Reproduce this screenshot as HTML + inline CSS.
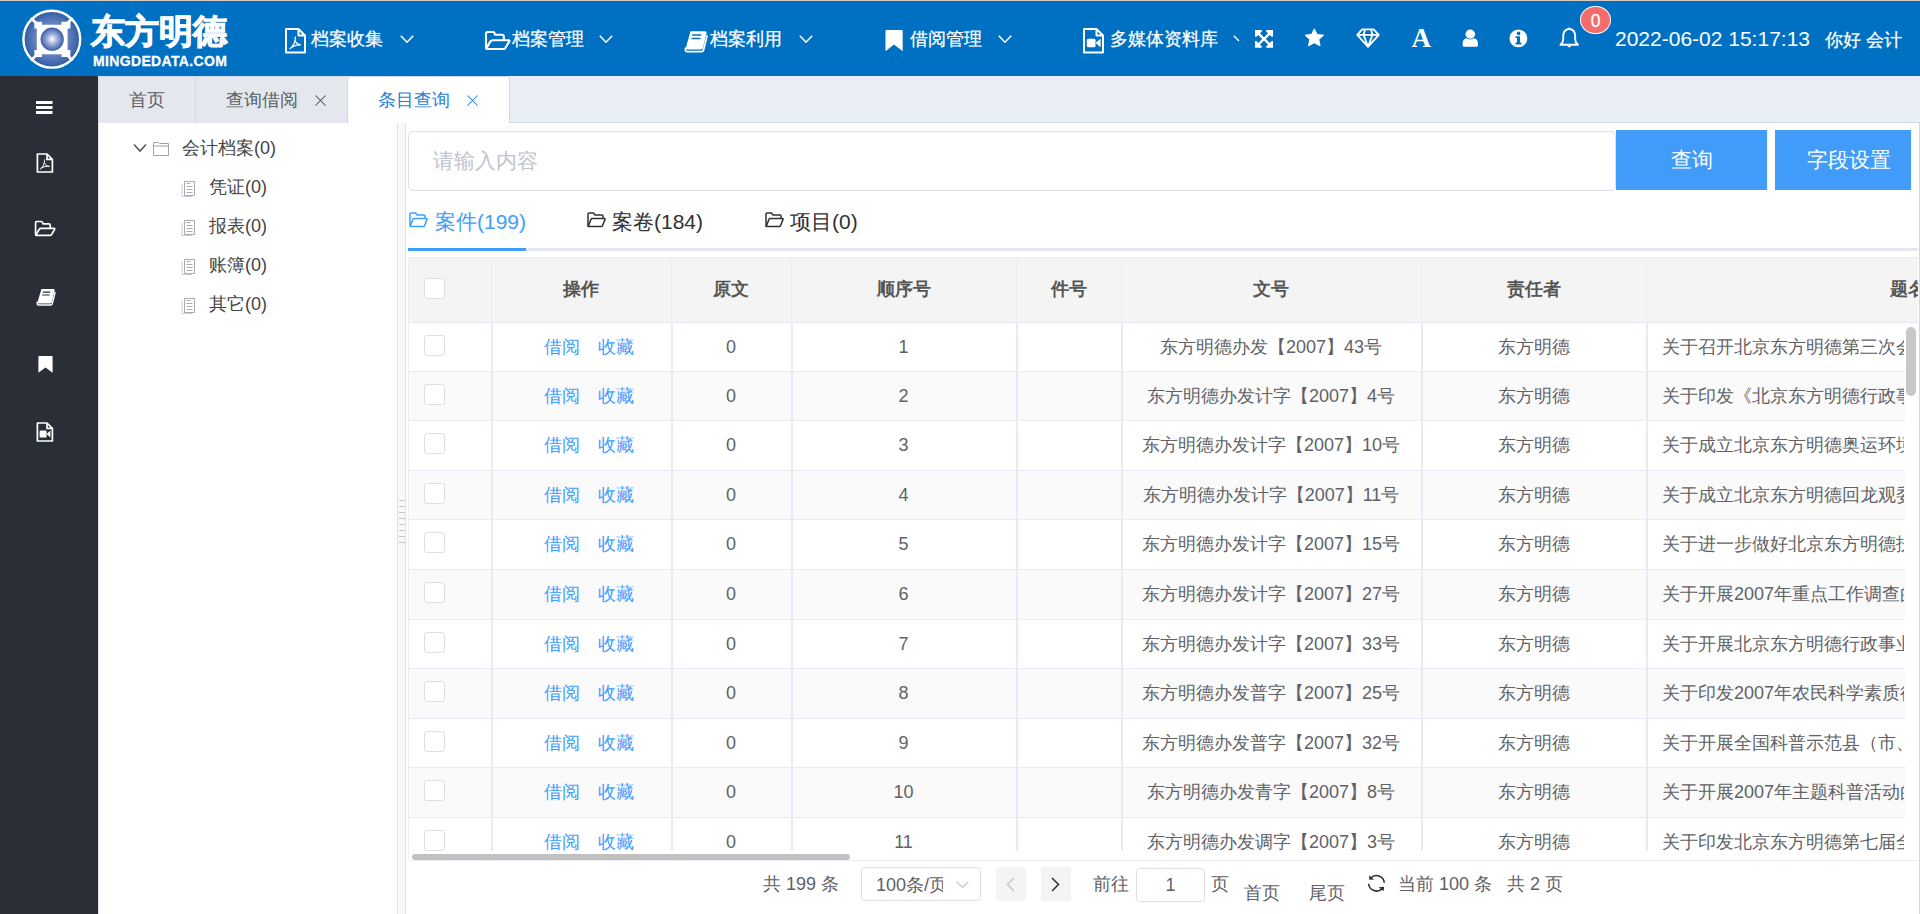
<!DOCTYPE html>
<html><head><meta charset="utf-8">
<style>
*{box-sizing:border-box;margin:0;padding:0}
html,body{width:1920px;height:914px;overflow:hidden;background:#fff;font-family:"Liberation Sans",sans-serif;color:#606266}
.abs{position:absolute}
.t{position:absolute;white-space:nowrap;line-height:1}
svg{position:absolute;overflow:visible}
#topline{left:0;top:0;width:1920px;height:1px;background:#d6cac2}
#hdr{left:0;top:1px;width:1920px;height:75px;background:#0070c2;color:#fff}
#hdr .t{color:#fff;font-size:18.4px;-webkit-text-stroke:0.25px #fff}
#side{left:0;top:76px;width:98px;height:838px;background:#2a2e37}
#tabs{left:98px;top:76px;width:1822px;height:47px;background:#e9eef6;border-bottom:1px solid #d1d9e6}
#tree{left:98px;top:123px;width:299px;height:791px;background:#fff;border-left:1px solid #dde4f0}
#split{left:397px;top:123px;width:9px;height:791px;background:#f8f8f9;border-left:1px solid #dfe1e6;border-right:1px solid #dfe1e6}
#main{left:406px;top:123px;width:1514px;height:791px;background:#fff;border-right:1px solid #d3d7df}
</style></head><body>
<div id="topline" class="abs"></div>
<div id="hdr" class="abs">
  <!-- logo -->
  <svg style="left:0;top:-1px" width="100" height="76" viewBox="0 0 100 76">
    <defs>
      <radialGradient id="lg1" cx="0.5" cy="0.5" r="0.5">
        <stop offset="0" stop-color="#9aaedc"/><stop offset="0.55" stop-color="#6a84c2"/><stop offset="1" stop-color="#2e5ba3"/>
      </radialGradient>
      <radialGradient id="rg1" cx="0.5" cy="0.5" r="0.5">
        <stop offset="0" stop-color="#ffffff"/><stop offset="0.4" stop-color="#a8b6e0"/><stop offset="1" stop-color="#3a5ca8"/>
      </radialGradient>
    </defs>
    <circle cx="51.8" cy="39.2" r="28.4" fill="url(#lg1)" stroke="#fff" stroke-width="2.4"/>
    <path d="M31,18 L38,25 M72.6,18 L65.6,25 M31,60.4 L38,53.4 M72.6,60.4 L65.6,53.4" stroke="#fff" stroke-width="2.8"/>
    <path fill="#fff" d="M34.4,21.7 H42 V24.8 H61.5 V21.7 H70.4 V28.5 H67.6 V50 H70.4 V57 H61.5 V54.2 H42 V57 H34.4 V50 H36.8 V28.5 H34.4 Z"/>
    <circle cx="52.2" cy="39.2" r="11.6" fill="url(#rg1)"/>
  </svg>
  <div class="t" style="left:91px;top:13px;font-size:34px;font-weight:bold;letter-spacing:0px;-webkit-text-stroke:1px #fff;transform:scaleX(1.0)">东方明德</div>
  <div class="t" style="left:93px;top:52px;font-size:14px;font-weight:bold;letter-spacing:0.35px;transform:scaleY(1.06);transform-origin:0 0">MINGDEDATA.COM</div>

  <!-- nav -->
  <svg style="left:285px;top:27px" width="22" height="26" viewBox="0 0 22 26">
    <path d="M1,1 H13.5 L20,7.5 V24.5 H1 Z M13.5,1 V7.5 H20" fill="none" stroke="#fff" stroke-width="2" stroke-linejoin="round"/>
    <path d="M4.5,21 C7,19.5 9,17 10,12.5 C10.5,10 10.5,9 10.2,8.5 M10,12.5 C11,15.5 13,16.5 16,17 M6,19.8 C9,17.5 13,16.5 16,17" fill="none" stroke="#fff" stroke-width="1.2"/>
  </svg>
  <div class="t" style="left:311px;top:29px">档案收集</div>
  <svg style="left:400px;top:34px" width="14" height="9" viewBox="0 0 14 9"><path d="M0.8,0.8 L7,7.2 L13.2,0.8" fill="none" stroke="#fff" stroke-width="1.6"/></svg>

  <svg style="left:484px;top:29px" width="27" height="21" viewBox="0 0 27 21">
    <path d="M2,18.5 V3.5 Q2,2 3.5,2 H9 Q10.2,2 10.6,3.2 L11,4.8 H18 Q19.8,4.8 19.8,6.6 V10" fill="none" stroke="#fff" stroke-width="2.1" stroke-linejoin="round"/>
    <path d="M2.2,18.6 L6.4,11.4 Q7.2,10.2 8.6,10.2 H24.6 Q26,10.2 25.2,11.6 L21.4,18 Q20.8,19 19.6,19 H3 Z" fill="none" stroke="#fff" stroke-width="2.1" stroke-linejoin="round"/>
  </svg>
  <div class="t" style="left:512px;top:29px">档案管理</div>
  <svg style="left:599px;top:34px" width="14" height="9" viewBox="0 0 14 9"><path d="M0.8,0.8 L7,7.2 L13.2,0.8" fill="none" stroke="#fff" stroke-width="1.6"/></svg>

  <svg style="left:684px;top:29px" width="24" height="23" viewBox="0 0 24 23">
    <path d="M6.5,1.2 H21 Q23,1.2 22.6,3 L19,18 Q18.5,19.5 17,19.5 H3 Q1.5,19.5 1.8,18 Z" fill="#fff"/>
    <path d="M1.6,17.5 Q0.5,21.6 3.4,21.6 H17.6 Q19.2,21.6 19.6,20 L23.2,5.4" fill="none" stroke="#fff" stroke-width="1.7"/>
    <path d="M8.2,5 H17.2 M7.6,8.5 H16.4" stroke="#0070c2" stroke-width="1.5"/>
  </svg>
  <div class="t" style="left:710px;top:29px">档案利用</div>
  <svg style="left:799px;top:34px" width="14" height="9" viewBox="0 0 14 9"><path d="M0.8,0.8 L7,7.2 L13.2,0.8" fill="none" stroke="#fff" stroke-width="1.6"/></svg>

  <svg style="left:885px;top:29px" width="18" height="22" viewBox="0 0 18 22">
    <path d="M0.5,1 Q0.5,0 1.5,0 H16.5 Q17.7,0 17.7,1 V20.5 Q17.7,21.3 16.8,20.6 L9,14.5 L1.4,20.6 Q0.5,21.3 0.5,20.5 Z" fill="#fff"/>
  </svg>
  <div class="t" style="left:910px;top:29px">借阅管理</div>
  <svg style="left:998px;top:34px" width="14" height="9" viewBox="0 0 14 9"><path d="M0.8,0.8 L7,7.2 L13.2,0.8" fill="none" stroke="#fff" stroke-width="1.6"/></svg>

  <svg style="left:1083px;top:27px" width="22" height="26" viewBox="0 0 22 26">
    <path d="M1,1 H13.5 L20,7.5 V24.5 H1 Z M13.5,1 V7.5 H20" fill="none" stroke="#fff" stroke-width="2" stroke-linejoin="round"/>
    <rect x="3.8" y="10.7" width="8.7" height="8.6" rx="1.5" fill="#fff"/>
    <path d="M12.6,15 L17.6,10.7 V19.3 Z" fill="#fff"/>
  </svg>
  <div class="t" style="left:1110px;top:29px">多媒体资料库</div>
  <svg style="left:1233px;top:34px" width="8" height="8" viewBox="0 0 8 8"><path d="M0.8,0.8 L6,6" fill="none" stroke="#fff" stroke-width="1.4"/></svg>

  <!-- right icons -->
  <svg style="left:1255px;top:28.5px" width="19" height="18" viewBox="0 0 19 18">
    <path fill="#fff" d="M0,0 H6.8 V1.4 L5,3.2 L9,7.2 L13,3.2 L11.2,1.4 V0 H18 V6.7 H16.6 L14.8,4.9 L10.8,8.9 L14.8,12.9 L16.6,11.1 H18 V17.8 H11.2 V16.4 L13,14.6 L9,10.6 L5,14.6 L6.8,16.4 V17.8 H0 V11.1 H1.4 L3.2,12.9 L7.2,8.9 L3.2,4.9 L1.4,6.7 H0 Z"/>
  </svg>
  <svg style="left:1304px;top:27px" width="21" height="20" viewBox="0 0 21 20">
    <path fill="#fff" d="M10.3,0.8 L13.1,6.5 L19.6,7.2 L14.8,11.5 L16.1,17.9 L10.3,14.7 L4.5,17.9 L5.8,11.5 L1,7.2 L7.5,6.5 Z" stroke="#fff" stroke-width="1" stroke-linejoin="round"/>
  </svg>
  <svg style="left:1356px;top:27.3px" width="25" height="21" viewBox="0 0 25 21">
    <path d="M6.2,1.3 H17.6 L22.8,6.9 L12,18.9 L1.2,6.9 Z M1.2,6.9 H22.8 M9,1.3 L7.6,6.9 L12,18.9 L16.4,6.9 L15,1.3" fill="none" stroke="#fff" stroke-width="1.8" stroke-linejoin="round"/>
  </svg>
  <div class="t" style="left:1411.5px;top:27px;font-family:'Liberation Serif',serif;font-weight:bold;font-size:27px;line-height:20px;-webkit-text-stroke:0">A</div>
  <svg style="left:1462px;top:28px" width="17" height="19" viewBox="0 0 17 20" preserveAspectRatio="none">
    <circle cx="8.3" cy="5.4" r="4.8" fill="#fff"/>
    <path d="M0.5,16.5 Q0.5,10.6 4.2,9.8 Q8.3,12.2 12.4,9.8 Q16,10.6 16,16.5 Q16,18.8 13.8,18.8 H2.8 Q0.5,18.8 0.5,16.5 Z" fill="#fff"/>
  </svg>
  <svg style="left:1509px;top:27.5px" width="19" height="19" viewBox="0 0 19 19">
    <circle cx="9.4" cy="9.4" r="8.9" fill="#fff"/>
    <circle cx="9.6" cy="4.4" r="1.8" fill="#0070c2"/>
    <path d="M6.6,7.3 H11 V13.6 H12.4 V15.4 H6.6 V13.6 H8 V9.1 H6.6 Z" fill="#0070c2"/>
  </svg>
  <svg style="left:1559px;top:26px" width="22" height="22" viewBox="0 0 22 22">
    <path d="M10.2,1.8 Q4.2,2.6 4.2,9.5 V12.5 Q4.2,15.4 1.4,17.8 H19 Q16.2,15.4 16.2,12.5 V9.5 Q16.2,2.6 10.2,1.8 Z" fill="none" stroke="#fff" stroke-width="1.9" stroke-linejoin="round"/>
    <path d="M8.4,18.8 Q10.2,21.4 12,18.8" fill="#fff" stroke="#fff" stroke-width="1"/>
    <circle cx="10.2" cy="1.6" r="1" fill="#fff"/>
  </svg>
  <div class="abs" style="left:1580px;top:5px;width:31px;height:28px;border-radius:15px/14px;background:#f56c6c;border:1px solid #fff;color:#fff;font-size:17.5px;line-height:28.5px;text-align:center;-webkit-text-stroke:0.3px #fff">0</div>
  <div class="t" style="left:1615px;top:27px;font-size:21px;-webkit-text-stroke:0">2022-06-02 15:17:13</div>
  <div class="t" style="left:1825px;top:30px;font-size:18px">你好 会计</div>
</div>

<div id="side" class="abs">
  <svg style="left:36px;top:25px" width="17" height="14" viewBox="0 0 17 14"><path d="M0,0 H16.5 V3 H0 Z M0,5 H16.5 V8 H0 Z M0,10 H16.5 V13 H0 Z" fill="#fff"/></svg>
  <svg style="left:36px;top:77px" width="18" height="20" viewBox="0 0 18 20">
    <path d="M1.4,1 H11 L16.4,6.4 V19 H1.4 Z M11,1 V6.4 H16.4" fill="none" stroke="#fff" stroke-width="1.7" stroke-linejoin="round"/>
    <path d="M4,16.2 C6,15 7.5,13 8.3,9.5 C8.7,7.5 8.5,6.5 8.4,6.4 M8.3,9.5 C9,12 10.7,13 13.4,13.4 M5.3,15.2 C7.5,13.6 10.5,13 13.4,13.4" fill="none" stroke="#fff" stroke-width="1"/>
  </svg>
  <svg style="left:34px;top:144px" width="22" height="17" viewBox="0 0 22 17">
    <path d="M1.6,15 V2.8 Q1.6,1.5 2.8,1.5 H7.2 Q8.2,1.5 8.6,2.5 L9,3.8 H14.8 Q16.2,3.8 16.2,5.2 V8" fill="none" stroke="#fff" stroke-width="1.7" stroke-linejoin="round"/>
    <path d="M1.8,15.2 L5.2,9.4 Q5.8,8.4 7,8.4 H20 Q21.2,8.4 20.5,9.6 L17.5,14.6 Q17,15.4 16,15.4 H2.4 Z" fill="none" stroke="#fff" stroke-width="1.7" stroke-linejoin="round"/>
  </svg>
  <svg style="left:36px;top:212px" width="20" height="18" viewBox="0 0 20 18">
    <path d="M5.4,1 H17.4 Q19,1 18.7,2.5 L15.8,14.2 Q15.4,15.4 14.2,15.4 H2.6 Q1.3,15.4 1.5,14.2 Z" fill="#fff"/>
    <path d="M1.4,13.8 Q0.4,17 2.8,17 H14.6 Q15.9,17 16.3,15.7 L19.2,4.2" fill="none" stroke="#fff" stroke-width="1.4"/>
    <path d="M6.8,4.2 H14.4 M6.3,7 H13.7" stroke="#2a2e37" stroke-width="1.2"/>
  </svg>
  <svg style="left:38px;top:280px" width="15" height="17" viewBox="0 0 15 17">
    <path d="M0.4,0.8 Q0.4,0 1.2,0 H13.8 Q14.6,0 14.6,0.8 V16.2 Q14.6,16.9 13.9,16.3 L7.5,11.5 L1.1,16.3 Q0.4,16.9 0.4,16.2 Z" fill="#fff"/>
  </svg>
  <svg style="left:36px;top:346px" width="18" height="20" viewBox="0 0 18 20">
    <path d="M1.4,1 H11 L16.4,6.4 V19 H1.4 Z M11,1 V6.4 H16.4" fill="none" stroke="#fff" stroke-width="1.7" stroke-linejoin="round"/>
    <rect x="3.6" y="8.6" width="7" height="7" rx="1.2" fill="#fff"/>
    <path d="M10.6,12.1 L14.4,8.6 V15.6 Z" fill="#fff"/>
  </svg>
</div>


<div id="tabs" class="abs">
<div class="abs" style="left:0;top:0;width:249px;height:47px;background:#e4e8ee;border-left:1px solid #d1d9e6;border-top:1px solid #d1d9e6;border-radius:3px 0 0 0"></div>
<div class="t" style="left:31px;top:15px;font-size:18px;color:#5a5e66">首页</div>
<div class="abs" style="left:97px;top:1px;width:1px;height:46px;background:#d1d9e6"></div>
<div class="t" style="left:128px;top:15px;font-size:18px;color:#5a5e66">查询借阅</div>
<svg style="left:216.5px;top:18.5px" width="11" height="11" viewBox="0 0 11 11"><path d="M0.5,0.5 L10.5,10.5 M10.5,0.5 L0.5,10.5" stroke="#4a4a4a" stroke-width="1.05"/></svg>
<div class="abs" style="left:249px;top:0;width:163px;height:48px;background:#fff;border:1px solid #d1d9e6;border-bottom:none;border-radius:4px 4px 0 0"></div>
<div class="t" style="left:280px;top:15px;font-size:18px;color:#1f7ed8">条目查询</div>
<svg style="left:368.5px;top:18.5px" width="11" height="11" viewBox="0 0 11 11"><path d="M0.5,0.5 L10.5,10.5 M10.5,0.5 L0.5,10.5" stroke="#1f7ed8" stroke-width="1.05"/></svg>
</div>

<div id="tree" class="abs">
<svg style="left:34px;top:20px" width="14" height="10" viewBox="0 0 14 10"><path d="M1,1.5 L7,8 L13,1.5" fill="none" stroke="#555" stroke-width="1.6"/></svg>
<svg style="left:54px;top:19px" width="16" height="14" viewBox="0 0 16 14"><path d="M0.5,0.5 H5.5 L6.5,1.5 H15.5 V13.5 H0.5 Z M0.5,4 H15.5" fill="none" stroke="#a0a3a8" stroke-width="1"/></svg>
<div class="t" style="left:83px;top:16px;font-size:18px;color:#444">会计档案(0)</div>
<svg style="left:82px;top:57.5px" width="15" height="16" viewBox="0 0 15 16"><path d="M3.5,0.5 H13.5 V14.5 H3.5 Z" fill="#fff" stroke="#a8abb0" stroke-width="1"/><path d="M1,2.5 V15.5 H11" fill="none" stroke="#c8cacf" stroke-width="1"/><path d="M5.5,2.5 H9.5 M5.5,5.5 H11.5 M5.5,8.5 H11.5 M5.5,11.5 H11.5" stroke="#a8abb0" stroke-width="1"/></svg>
<div class="t" style="left:110px;top:55px;font-size:18px;color:#444">凭证(0)</div>
<svg style="left:82px;top:96.5px" width="15" height="16" viewBox="0 0 15 16"><path d="M3.5,0.5 H13.5 V14.5 H3.5 Z" fill="#fff" stroke="#a8abb0" stroke-width="1"/><path d="M1,2.5 V15.5 H11" fill="none" stroke="#c8cacf" stroke-width="1"/><path d="M5.5,2.5 H9.5 M5.5,5.5 H11.5 M5.5,8.5 H11.5 M5.5,11.5 H11.5" stroke="#a8abb0" stroke-width="1"/></svg>
<div class="t" style="left:110px;top:94px;font-size:18px;color:#444">报表(0)</div>
<svg style="left:82px;top:135.5px" width="15" height="16" viewBox="0 0 15 16"><path d="M3.5,0.5 H13.5 V14.5 H3.5 Z" fill="#fff" stroke="#a8abb0" stroke-width="1"/><path d="M1,2.5 V15.5 H11" fill="none" stroke="#c8cacf" stroke-width="1"/><path d="M5.5,2.5 H9.5 M5.5,5.5 H11.5 M5.5,8.5 H11.5 M5.5,11.5 H11.5" stroke="#a8abb0" stroke-width="1"/></svg>
<div class="t" style="left:110px;top:133px;font-size:18px;color:#444">账簿(0)</div>
<svg style="left:82px;top:174.5px" width="15" height="16" viewBox="0 0 15 16"><path d="M3.5,0.5 H13.5 V14.5 H3.5 Z" fill="#fff" stroke="#a8abb0" stroke-width="1"/><path d="M1,2.5 V15.5 H11" fill="none" stroke="#c8cacf" stroke-width="1"/><path d="M5.5,2.5 H9.5 M5.5,5.5 H11.5 M5.5,8.5 H11.5 M5.5,11.5 H11.5" stroke="#a8abb0" stroke-width="1"/></svg>
<div class="t" style="left:110px;top:172px;font-size:18px;color:#444">其它(0)</div>
</div>

<div id="split" class="abs"></div>
<div class="abs" style="left:399px;top:500px;width:6px;height:1px;background:#c6c8cc"></div><div class="abs" style="left:399px;top:506px;width:6px;height:1px;background:#c6c8cc"></div><div class="abs" style="left:399px;top:512px;width:6px;height:1px;background:#c6c8cc"></div><div class="abs" style="left:399px;top:518px;width:6px;height:1px;background:#c6c8cc"></div><div class="abs" style="left:399px;top:524px;width:6px;height:1px;background:#c6c8cc"></div><div class="abs" style="left:399px;top:530px;width:6px;height:1px;background:#c6c8cc"></div><div class="abs" style="left:399px;top:536px;width:6px;height:1px;background:#c6c8cc"></div><div class="abs" style="left:399px;top:542px;width:6px;height:1px;background:#c6c8cc"></div>
<div id="main" class="abs"></div>
<div class="abs" style="left:0;top:0;width:1920px;height:914px">
<div class="abs" style="left:408px;top:131px;width:1208px;height:60px;border:1px solid #dcdfe6;border-radius:5px;background:#fff"></div>
<div class="t" style="left:433px;top:150.5px;font-size:20.5px;color:#c0c4cc">请输入内容</div>
<div class="abs" style="left:1616px;top:130px;width:151px;height:60px;background:#419cf9;color:#fff;font-size:21px;line-height:60px;text-align:center">查询</div>
<div class="abs" style="left:1775px;top:130px;width:136px;height:60px;background:#419cf9;color:#fff;font-size:21px;line-height:60px;text-align:center;padding-left:12px">字段设置</div>
<div class="abs" style="left:408px;top:248px;width:1510px;height:3px;background:#e4e7ed"></div>
<div class="abs" style="left:408px;top:248px;width:118px;height:3px;background:#409eff"></div>
<svg style="left:409px;top:212px" width="19" height="16" viewBox="0 0 19 16"><path d="M1,14.5 V2 Q1,1 2,1 H6.5 L8,3 H15 Q16,3 16,4 V6.2" fill="none" stroke="#409eff" stroke-width="1.5" stroke-linejoin="round"/><path d="M1.2,14.6 L4,7.2 Q4.3,6.4 5.2,6.4 H17.4 Q18.4,6.4 18,7.4 L15.4,14 Q15.1,14.6 14.4,14.6 Z" fill="none" stroke="#409eff" stroke-width="1.5" stroke-linejoin="round"/></svg>
<div class="t" style="left:435px;top:210.5px;font-size:21px;color:#409eff">案件(199)</div>
<svg style="left:587px;top:212px" width="19" height="16" viewBox="0 0 19 16"><path d="M1,14.5 V2 Q1,1 2,1 H6.5 L8,3 H15 Q16,3 16,4 V6.2" fill="none" stroke="#303133" stroke-width="1.5" stroke-linejoin="round"/><path d="M1.2,14.6 L4,7.2 Q4.3,6.4 5.2,6.4 H17.4 Q18.4,6.4 18,7.4 L15.4,14 Q15.1,14.6 14.4,14.6 Z" fill="none" stroke="#303133" stroke-width="1.5" stroke-linejoin="round"/></svg>
<div class="t" style="left:612px;top:210.5px;font-size:21px;color:#303133">案卷(184)</div>
<svg style="left:765px;top:212px" width="19" height="16" viewBox="0 0 19 16"><path d="M1,14.5 V2 Q1,1 2,1 H6.5 L8,3 H15 Q16,3 16,4 V6.2" fill="none" stroke="#303133" stroke-width="1.5" stroke-linejoin="round"/><path d="M1.2,14.6 L4,7.2 Q4.3,6.4 5.2,6.4 H17.4 Q18.4,6.4 18,7.4 L15.4,14 Q15.1,14.6 14.4,14.6 Z" fill="none" stroke="#303133" stroke-width="1.5" stroke-linejoin="round"/></svg>
<div class="t" style="left:790px;top:210.5px;font-size:21px;color:#303133">项目(0)</div>
<div class="abs" style="left:408px;top:257px;width:1510px;height:604px;overflow:hidden;border:1px solid #ebeef5;border-right:none">
<div class="abs" style="left:0;top:0;width:1510px;height:65px;background:#f4f4f5;border-bottom:1px solid #e6e8f2"></div>
<div class="abs" style="left:82px;top:0;width:1px;height:65px;background:#ebeef5"></div>
<div class="t" style="left:82px;width:180px;top:22px;text-align:center;font-size:18px;font-weight:bold;color:#555">操作</div>
<div class="abs" style="left:262px;top:0;width:1px;height:65px;background:#ebeef5"></div>
<div class="t" style="left:262px;width:120px;top:22px;text-align:center;font-size:18px;font-weight:bold;color:#555">原文</div>
<div class="abs" style="left:382px;top:0;width:1px;height:65px;background:#ebeef5"></div>
<div class="t" style="left:382px;width:225px;top:22px;text-align:center;font-size:18px;font-weight:bold;color:#555">顺序号</div>
<div class="abs" style="left:607px;top:0;width:1px;height:65px;background:#ebeef5"></div>
<div class="t" style="left:607px;width:105px;top:22px;text-align:center;font-size:18px;font-weight:bold;color:#555">件号</div>
<div class="abs" style="left:712px;top:0;width:1px;height:65px;background:#ebeef5"></div>
<div class="t" style="left:712px;width:300px;top:22px;text-align:center;font-size:18px;font-weight:bold;color:#555">文号</div>
<div class="abs" style="left:1012px;top:0;width:1px;height:65px;background:#ebeef5"></div>
<div class="t" style="left:1012px;width:225px;top:22px;text-align:center;font-size:18px;font-weight:bold;color:#555">责任者</div>
<div class="abs" style="left:1237px;top:0;width:1px;height:65px;background:#ebeef5"></div>
<div class="t" style="left:1237px;width:524px;top:22px;text-align:center;font-size:18px;font-weight:bold;color:#555">题名</div>
<div class="abs" style="left:15px;top:20px;width:21px;height:21px;border:1px solid #dcdfe6;border-radius:3px;background:#fff"></div>
<div class="abs" style="left:0;top:65px;width:1496px;height:49px;background:#fff;border-bottom:1px solid #e8ebf3"></div>
<div class="abs" style="left:0;top:114px;width:1496px;height:49px;background:#fafafa;border-bottom:1px solid #e8ebf3"></div>
<div class="abs" style="left:0;top:163px;width:1496px;height:50px;background:#fff;border-bottom:1px solid #e8ebf3"></div>
<div class="abs" style="left:0;top:213px;width:1496px;height:49px;background:#fafafa;border-bottom:1px solid #e8ebf3"></div>
<div class="abs" style="left:0;top:262px;width:1496px;height:50px;background:#fff;border-bottom:1px solid #e8ebf3"></div>
<div class="abs" style="left:0;top:312px;width:1496px;height:50px;background:#fafafa;border-bottom:1px solid #e8ebf3"></div>
<div class="abs" style="left:0;top:362px;width:1496px;height:49px;background:#fff;border-bottom:1px solid #e8ebf3"></div>
<div class="abs" style="left:0;top:411px;width:1496px;height:50px;background:#fafafa;border-bottom:1px solid #e8ebf3"></div>
<div class="abs" style="left:0;top:461px;width:1496px;height:49px;background:#fff;border-bottom:1px solid #e8ebf3"></div>
<div class="abs" style="left:0;top:510px;width:1496px;height:50px;background:#fafafa;border-bottom:1px solid #e8ebf3"></div>
<div class="abs" style="left:0;top:560px;width:1496px;height:49px;background:#fff;border-bottom:1px solid #e8ebf3"></div>
<div class="abs" style="left:82px;top:65px;width:2px;height:540px;background:#e8ebf4"></div>
<div class="abs" style="left:262px;top:65px;width:2px;height:540px;background:#e8ebf4"></div>
<div class="abs" style="left:382px;top:65px;width:2px;height:540px;background:#e8ebf4"></div>
<div class="abs" style="left:607px;top:65px;width:2px;height:540px;background:#e8ebf4"></div>
<div class="abs" style="left:712px;top:65px;width:2px;height:540px;background:#e8ebf4"></div>
<div class="abs" style="left:1012px;top:65px;width:2px;height:540px;background:#e8ebf4"></div>
<div class="abs" style="left:1237px;top:65px;width:2px;height:540px;background:#e8ebf4"></div>
<div class="abs" style="left:15px;top:77px;width:21px;height:21px;border:1px solid #dcdfe6;border-radius:3px;background:#fff"></div>
<div class="t" style="left:135px;top:80px;font-size:18px;color:#409eff">借阅</div>
<div class="t" style="left:189px;top:80px;font-size:18px;color:#409eff">收藏</div>
<div class="t" style="left:262px;width:120px;top:80px;text-align:center;font-size:18px;color:#606266">0</div>
<div class="t" style="left:382px;width:225px;top:80px;text-align:center;font-size:18px;color:#606266">1</div>
<div class="t" style="left:712px;width:300px;top:80px;text-align:center;font-size:18px;color:#606266">东方明德办发【2007】43号</div>
<div class="t" style="left:1012px;width:225px;top:80px;text-align:center;font-size:18px;color:#606266">东方明德</div>
<div class="t" style="left:1253px;top:80px;font-size:18px;color:#606266;width:242px;overflow:hidden">关于召开北京东方明德第三次会议的通知</div>
<div class="abs" style="left:15px;top:126px;width:21px;height:21px;border:1px solid #dcdfe6;border-radius:3px;background:#fff"></div>
<div class="t" style="left:135px;top:129px;font-size:18px;color:#409eff">借阅</div>
<div class="t" style="left:189px;top:129px;font-size:18px;color:#409eff">收藏</div>
<div class="t" style="left:262px;width:120px;top:129px;text-align:center;font-size:18px;color:#606266">0</div>
<div class="t" style="left:382px;width:225px;top:129px;text-align:center;font-size:18px;color:#606266">2</div>
<div class="t" style="left:712px;width:300px;top:129px;text-align:center;font-size:18px;color:#606266">东方明德办发计字【2007】4号</div>
<div class="t" style="left:1012px;width:225px;top:129px;text-align:center;font-size:18px;color:#606266">东方明德</div>
<div class="t" style="left:1253px;top:129px;font-size:18px;color:#606266;width:242px;overflow:hidden">关于印发《北京东方明德行政事业单位</div>
<div class="abs" style="left:15px;top:175px;width:21px;height:21px;border:1px solid #dcdfe6;border-radius:3px;background:#fff"></div>
<div class="t" style="left:135px;top:178px;font-size:18px;color:#409eff">借阅</div>
<div class="t" style="left:189px;top:178px;font-size:18px;color:#409eff">收藏</div>
<div class="t" style="left:262px;width:120px;top:178px;text-align:center;font-size:18px;color:#606266">0</div>
<div class="t" style="left:382px;width:225px;top:178px;text-align:center;font-size:18px;color:#606266">3</div>
<div class="t" style="left:712px;width:300px;top:178px;text-align:center;font-size:18px;color:#606266">东方明德办发计字【2007】10号</div>
<div class="t" style="left:1012px;width:225px;top:178px;text-align:center;font-size:18px;color:#606266">东方明德</div>
<div class="t" style="left:1253px;top:178px;font-size:18px;color:#606266;width:242px;overflow:hidden">关于成立北京东方明德奥运环境</div>
<div class="abs" style="left:15px;top:225px;width:21px;height:21px;border:1px solid #dcdfe6;border-radius:3px;background:#fff"></div>
<div class="t" style="left:135px;top:228px;font-size:18px;color:#409eff">借阅</div>
<div class="t" style="left:189px;top:228px;font-size:18px;color:#409eff">收藏</div>
<div class="t" style="left:262px;width:120px;top:228px;text-align:center;font-size:18px;color:#606266">0</div>
<div class="t" style="left:382px;width:225px;top:228px;text-align:center;font-size:18px;color:#606266">4</div>
<div class="t" style="left:712px;width:300px;top:228px;text-align:center;font-size:18px;color:#606266">东方明德办发计字【2007】11号</div>
<div class="t" style="left:1012px;width:225px;top:228px;text-align:center;font-size:18px;color:#606266">东方明德</div>
<div class="t" style="left:1253px;top:228px;font-size:18px;color:#606266;width:242px;overflow:hidden">关于成立北京东方明德回龙观委员会</div>
<div class="abs" style="left:15px;top:274px;width:21px;height:21px;border:1px solid #dcdfe6;border-radius:3px;background:#fff"></div>
<div class="t" style="left:135px;top:277px;font-size:18px;color:#409eff">借阅</div>
<div class="t" style="left:189px;top:277px;font-size:18px;color:#409eff">收藏</div>
<div class="t" style="left:262px;width:120px;top:277px;text-align:center;font-size:18px;color:#606266">0</div>
<div class="t" style="left:382px;width:225px;top:277px;text-align:center;font-size:18px;color:#606266">5</div>
<div class="t" style="left:712px;width:300px;top:277px;text-align:center;font-size:18px;color:#606266">东方明德办发计字【2007】15号</div>
<div class="t" style="left:1012px;width:225px;top:277px;text-align:center;font-size:18px;color:#606266">东方明德</div>
<div class="t" style="left:1253px;top:277px;font-size:18px;color:#606266;width:242px;overflow:hidden">关于进一步做好北京东方明德扶贫工作</div>
<div class="abs" style="left:15px;top:324px;width:21px;height:21px;border:1px solid #dcdfe6;border-radius:3px;background:#fff"></div>
<div class="t" style="left:135px;top:327px;font-size:18px;color:#409eff">借阅</div>
<div class="t" style="left:189px;top:327px;font-size:18px;color:#409eff">收藏</div>
<div class="t" style="left:262px;width:120px;top:327px;text-align:center;font-size:18px;color:#606266">0</div>
<div class="t" style="left:382px;width:225px;top:327px;text-align:center;font-size:18px;color:#606266">6</div>
<div class="t" style="left:712px;width:300px;top:327px;text-align:center;font-size:18px;color:#606266">东方明德办发计字【2007】27号</div>
<div class="t" style="left:1012px;width:225px;top:327px;text-align:center;font-size:18px;color:#606266">东方明德</div>
<div class="t" style="left:1253px;top:327px;font-size:18px;color:#606266;width:242px;overflow:hidden">关于开展2007年重点工作调查的通知</div>
<div class="abs" style="left:15px;top:374px;width:21px;height:21px;border:1px solid #dcdfe6;border-radius:3px;background:#fff"></div>
<div class="t" style="left:135px;top:377px;font-size:18px;color:#409eff">借阅</div>
<div class="t" style="left:189px;top:377px;font-size:18px;color:#409eff">收藏</div>
<div class="t" style="left:262px;width:120px;top:377px;text-align:center;font-size:18px;color:#606266">0</div>
<div class="t" style="left:382px;width:225px;top:377px;text-align:center;font-size:18px;color:#606266">7</div>
<div class="t" style="left:712px;width:300px;top:377px;text-align:center;font-size:18px;color:#606266">东方明德办发计字【2007】33号</div>
<div class="t" style="left:1012px;width:225px;top:377px;text-align:center;font-size:18px;color:#606266">东方明德</div>
<div class="t" style="left:1253px;top:377px;font-size:18px;color:#606266;width:242px;overflow:hidden">关于开展北京东方明德行政事业单位</div>
<div class="abs" style="left:15px;top:423px;width:21px;height:21px;border:1px solid #dcdfe6;border-radius:3px;background:#fff"></div>
<div class="t" style="left:135px;top:426px;font-size:18px;color:#409eff">借阅</div>
<div class="t" style="left:189px;top:426px;font-size:18px;color:#409eff">收藏</div>
<div class="t" style="left:262px;width:120px;top:426px;text-align:center;font-size:18px;color:#606266">0</div>
<div class="t" style="left:382px;width:225px;top:426px;text-align:center;font-size:18px;color:#606266">8</div>
<div class="t" style="left:712px;width:300px;top:426px;text-align:center;font-size:18px;color:#606266">东方明德办发普字【2007】25号</div>
<div class="t" style="left:1012px;width:225px;top:426px;text-align:center;font-size:18px;color:#606266">东方明德</div>
<div class="t" style="left:1253px;top:426px;font-size:18px;color:#606266;width:242px;overflow:hidden">关于印发2007年农民科学素质行动</div>
<div class="abs" style="left:15px;top:473px;width:21px;height:21px;border:1px solid #dcdfe6;border-radius:3px;background:#fff"></div>
<div class="t" style="left:135px;top:476px;font-size:18px;color:#409eff">借阅</div>
<div class="t" style="left:189px;top:476px;font-size:18px;color:#409eff">收藏</div>
<div class="t" style="left:262px;width:120px;top:476px;text-align:center;font-size:18px;color:#606266">0</div>
<div class="t" style="left:382px;width:225px;top:476px;text-align:center;font-size:18px;color:#606266">9</div>
<div class="t" style="left:712px;width:300px;top:476px;text-align:center;font-size:18px;color:#606266">东方明德办发普字【2007】32号</div>
<div class="t" style="left:1012px;width:225px;top:476px;text-align:center;font-size:18px;color:#606266">东方明德</div>
<div class="t" style="left:1253px;top:476px;font-size:18px;color:#606266;width:242px;overflow:hidden">关于开展全国科普示范县（市、区）</div>
<div class="abs" style="left:15px;top:522px;width:21px;height:21px;border:1px solid #dcdfe6;border-radius:3px;background:#fff"></div>
<div class="t" style="left:135px;top:525px;font-size:18px;color:#409eff">借阅</div>
<div class="t" style="left:189px;top:525px;font-size:18px;color:#409eff">收藏</div>
<div class="t" style="left:262px;width:120px;top:525px;text-align:center;font-size:18px;color:#606266">0</div>
<div class="t" style="left:382px;width:225px;top:525px;text-align:center;font-size:18px;color:#606266">10</div>
<div class="t" style="left:712px;width:300px;top:525px;text-align:center;font-size:18px;color:#606266">东方明德办发青字【2007】8号</div>
<div class="t" style="left:1012px;width:225px;top:525px;text-align:center;font-size:18px;color:#606266">东方明德</div>
<div class="t" style="left:1253px;top:525px;font-size:18px;color:#606266;width:242px;overflow:hidden">关于开展2007年主题科普活动的通知</div>
<div class="abs" style="left:15px;top:572px;width:21px;height:21px;border:1px solid #dcdfe6;border-radius:3px;background:#fff"></div>
<div class="t" style="left:135px;top:575px;font-size:18px;color:#409eff">借阅</div>
<div class="t" style="left:189px;top:575px;font-size:18px;color:#409eff">收藏</div>
<div class="t" style="left:262px;width:120px;top:575px;text-align:center;font-size:18px;color:#606266">0</div>
<div class="t" style="left:382px;width:225px;top:575px;text-align:center;font-size:18px;color:#606266">11</div>
<div class="t" style="left:712px;width:300px;top:575px;text-align:center;font-size:18px;color:#606266">东方明德办发调字【2007】3号</div>
<div class="t" style="left:1012px;width:225px;top:575px;text-align:center;font-size:18px;color:#606266">东方明德</div>
<div class="t" style="left:1253px;top:575px;font-size:18px;color:#606266;width:242px;overflow:hidden">关于印发北京东方明德第七届全会</div>
<div class="abs" style="left:1496px;top:65px;width:14px;height:540px;background:#fff"></div>
<div class="abs" style="left:1497px;top:69px;width:10px;height:69px;border-radius:5px;background:#c8c8c8"></div>
<div class="abs" style="left:0;top:593px;width:1510px;height:10px;background:#fff"></div>
<div class="abs" style="left:3px;top:596px;width:438px;height:6px;border-radius:3px;background:#c1c1c1"></div>
</div>
<div class="t" style="left:763px;top:875px;font-size:18px;color:#606266">共 199 条</div>
<div class="abs" style="left:861px;top:867px;width:120px;height:34px;border:1px solid #dcdfe6;border-radius:4px"></div>
<div class="abs" style="left:862px;top:868px;width:81px;height:32px;overflow:hidden"><div class="t" style="left:14px;top:8px;font-size:18px;color:#606266">100条/页</div></div>
<svg style="left:956px;top:881px" width="13" height="8" viewBox="0 0 13 8"><path d="M0.6,0.6 L6.5,6.5 L12.4,0.6" fill="none" stroke="#c0c4cc" stroke-width="1.2"/></svg>
<div class="abs" style="left:996px;top:867px;width:30px;height:34px;background:#f4f4f5;border-radius:2px"></div>
<svg style="left:1006px;top:877px" width="9" height="15" viewBox="0 0 9 15"><path d="M8,1 L1.5,7.5 L8,14" fill="none" stroke="#c0c4cc" stroke-width="1.5"/></svg>
<div class="abs" style="left:1041px;top:867px;width:30px;height:34px;background:#f4f4f5;border-radius:2px"></div>
<svg style="left:1051px;top:877px" width="9" height="15" viewBox="0 0 9 15"><path d="M1,1 L7.5,7.5 L1,14" fill="none" stroke="#303133" stroke-width="1.5"/></svg>
<div class="t" style="left:1093px;top:875px;font-size:18px;color:#606266">前往</div>
<div class="abs" style="left:1136px;top:868px;width:69px;height:34px;border:1px solid #dcdfe6;border-radius:4px;text-align:center;font-size:18px;line-height:32px;color:#606266">1</div>
<div class="t" style="left:1211px;top:875px;font-size:18px;color:#606266">页</div>
<div class="t" style="left:1244px;top:883.5px;font-size:18px;color:#606266">首页</div>
<div class="t" style="left:1309px;top:883.5px;font-size:18px;color:#606266">尾页</div>
<svg style="left:1366px;top:873px" width="20" height="20" viewBox="0 0 20 20"><path d="M4.6,5.2 A7.9,7.9 0 0 1 18.3,9.8" fill="none" stroke="#303133" stroke-width="1.6"/><path d="M2.6,10.8 A7.9,7.9 0 0 0 16.2,15.6" fill="none" stroke="#303133" stroke-width="1.6"/><path d="M3.1,2.2 L3.3,6.8 L8,6.5 Z" fill="#303133"/><path d="M12.8,14.2 L18.1,13.7 L17.6,18.2 Z" fill="#303133"/></svg>
<div class="t" style="left:1398px;top:875px;font-size:18px;color:#606266">当前 100 条</div>
<div class="t" style="left:1507px;top:875px;font-size:18px;color:#606266">共 2 页</div>
</div>
</body></html>
